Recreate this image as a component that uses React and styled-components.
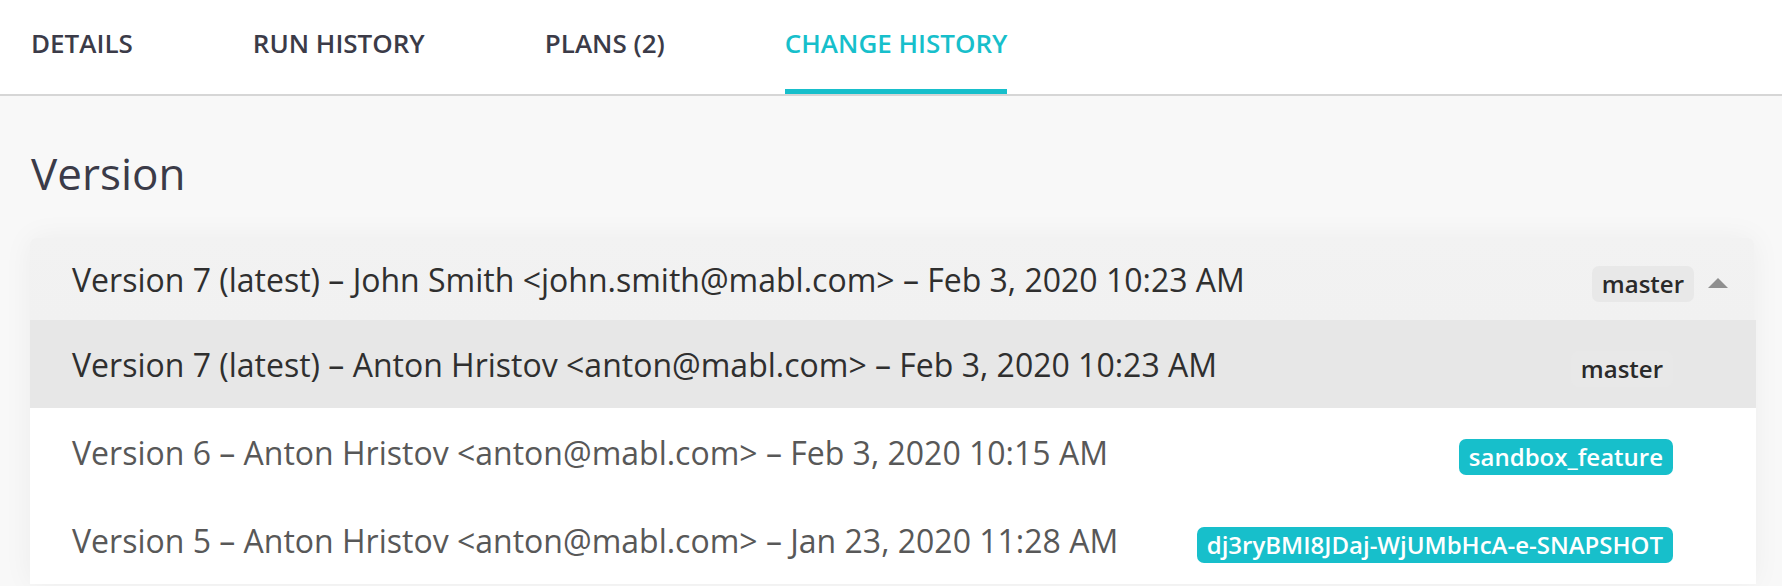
import React from "react";
import styled, { createGlobalStyle } from "styled-components";

const GlobalStyle = createGlobalStyle`
  body {
    margin: 0;
    background: #f8f8f8;
    font-family: "Open Sans", "Liberation Sans", sans-serif;
  }
`;

const tabs = ["Details", "Run History", "Plans (2)", "Change History"];

const versions = [
  {
    label: "Version 7 (latest) – Anton Hristov <anton@mabl.com> – Feb 3, 2020 10:23 AM",
    branch: "master",
    main: true,
  },
  {
    label: "Version 6 – Anton Hristov <anton@mabl.com> – Feb 3, 2020 10:15 AM",
    branch: "sandbox_feature",
  },
  {
    label: "Version 5 – Anton Hristov <anton@mabl.com> – Jan 23, 2020 11:28 AM",
    branch: "dj3ryBMI8JDaj-WjUMbHcA-e-SNAPSHOT",
  },
];

const Page = styled.div`
  min-height: 586px;
`;

const TabBar = styled.nav`
  display: flex;
  gap: 120px;
  padding-left: 31px;
  background: #fff;
  border-bottom: 2px solid #d6d6d6;
  box-sizing: border-box;
  height: 96px;
`;

const Tab = styled.div`
  display: flex;
  align-items: center;
  padding-bottom: 4px;
  font-size: 26px;
  font-weight: 600;
  text-transform: uppercase;
  color: ${(p) => (p.$active ? "#17bfcb" : "#3b3b48")};
  border-bottom: 5px solid ${(p) => (p.$active ? "#17bfcb" : "transparent")};
`;

const Content = styled.main`
  padding: 47px 28px 0 30px;
`;

const Heading = styled.h2`
  margin: 0 0 35px 1px;
  font-size: 44px;
  line-height: 60px;
  font-weight: 400;
  color: #3b3b48;
`;

const Dropdown = styled.div`
  border-radius: 6px;
  box-shadow: 0 0 30px rgba(0, 0, 0, 0.05);
`;

const Header = styled.div`
  display: flex;
  align-items: center;
  height: 82px;
  padding: 0 26px 0 42px;
  background: linear-gradient(#f2f2f2, #f1f1f1);
  border-radius: 6px 6px 0 0;
  font-size: 32px;
  color: #2f2f2f;
`;

const Label = styled.span`
  flex: 1;
  white-space: nowrap;
`;

const Badge = styled.span`
  margin-top: 9px;
  padding: 6px 10px;
  border-radius: 7px;
  font-size: 24px;
  line-height: 24px;
  font-weight: 600;
  white-space: nowrap;
  background: ${(p) => (p.$tone === "teal" ? "#17bfcb" : "#e8e8e8")};
  color: ${(p) => (p.$tone === "teal" ? "#fff" : "#2a2a2a")};
`;

const Caret = styled.span`
  width: 0;
  height: 0;
  margin: 8px 0 0 14px;
  border-left: 10px solid transparent;
  border-right: 10px solid transparent;
  border-bottom: 10px solid #8f8f8f;
`;

const Menu = styled.ul`
  list-style: none;
  margin: 0 -2px 0 0;
  padding: 0;
  background: #fff;
`;

const Item = styled.li`
  display: flex;
  align-items: center;
  height: 88px;
  padding: 0 83px 0 42px;
  font-size: 32px;
  background: ${(p) => (p.$selected ? "#e7e7e7" : "#fff")};
  color: ${(p) => (p.$selected ? "#2f2f2f" : "#585858")};
`;

export default function App() {
  return (
    <Page>
      <GlobalStyle />
      <TabBar>
        {tabs.map((t, i) => (
          <Tab key={t} $active={i === tabs.length - 1}>
            {t}
          </Tab>
        ))}
      </TabBar>
      <Content>
        <Heading>Version</Heading>
        <Dropdown>
          <Header>
            <Label>
              Version 7 (latest) – John Smith &lt;john.smith@mabl.com&gt; – Feb 3, 2020 10:23 AM
            </Label>
            <Badge>master</Badge>
            <Caret />
          </Header>
          <Menu>
            {versions.map((v) => (
              <Item key={v.label} $selected={v.main}>
                <Label>{v.label}</Label>
                <Badge $tone={v.main ? "plain" : "teal"}>{v.branch}</Badge>
              </Item>
            ))}
          </Menu>
        </Dropdown>
      </Content>
    </Page>
  );
}
